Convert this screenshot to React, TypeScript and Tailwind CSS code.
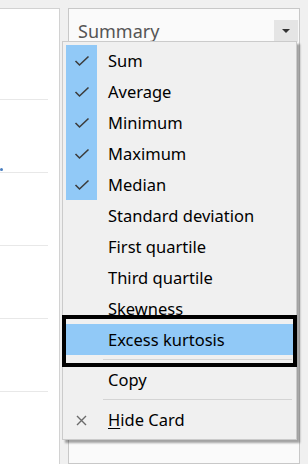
import React from 'react';

const font = { fontFamily: '"Noto Sans", "Open Sans", sans-serif' };

type Item = { label: string; checked?: boolean; active?: boolean };

const stats: Item[] = [
  { label: 'Sum', checked: true },
  { label: 'Average', checked: true },
  { label: 'Minimum', checked: true },
  { label: 'Maximum', checked: true },
  { label: 'Median', checked: true },
  { label: 'Standard deviation' },
  { label: 'First quartile' },
  { label: 'Third quartile' },
  { label: 'Skewness' },
  { label: 'Excess kurtosis', active: true },
];

const Check = () => (
  <svg width="16" height="12" viewBox="0 0 16 12" fill="none">
    <path d="M1.5 6 L5.5 10 L14.5 1.5" stroke="#3c3c3c" strokeWidth="1.6" />
  </svg>
);

const MenuRow: React.FC<{ item: Item }> = ({ item }) => (
  <div className={`flex h-[31px] items-center ${item.active ? 'bg-[#91c9f7]' : ''}`}>
    <div className={`flex h-full w-[31px] items-center justify-center ${item.checked ? 'bg-[#91c9f7]' : ''}`}>
      {item.checked && <Check />}
    </div>
    <span className="pl-[11px] pt-[2px] text-[16.5px] text-black">{item.label}</span>
  </div>
);

const Separator = () => (
  <div className="flex h-[9px] items-center pl-[37px] pr-[1px]">
    <div className="h-px flex-1 bg-[#d4d4d4]" />
  </div>
);

const SummaryMenu = () => (
  <div className="absolute left-[62px] top-[41px] w-[235px] border border-[#cbcbcb] bg-[#f0f0f0] p-[3px] pb-[4px] shadow-[3px_3px_2px_rgba(0,0,0,0.35)]">
    {stats.map((s) => (
      <MenuRow key={s.label} item={s} />
    ))}
    <Separator />
    <MenuRow item={{ label: 'Copy' }} />
    <Separator />
    <div className="flex h-[31px] items-center">
      <div className="flex w-[31px] items-center justify-center pt-[2px]">
        <svg width="11" height="11" viewBox="0 0 11 11">
          <path d="M1 1 L10 10 M10 1 L1 10" stroke="#6b6b6b" strokeWidth="1.4" />
        </svg>
      </div>
      <span className="pl-[11px] pt-[2px] text-[16.5px] text-black">
        <span className="underline underline-offset-2">H</span>ide Card
      </span>
    </div>
  </div>
);

export default function App() {
  return (
    <div className="relative h-[464px] w-[308px] overflow-hidden bg-[#f0f0f0]" style={font}>
      <div className="flex h-full gap-[8px] pt-[8px]">
        {/* left card */}
        <div className="relative h-full w-[60px] border-r border-t border-[#d2d2d2] bg-white">
          <div className="flex flex-col pt-[90px]">
            {[0, 1, 2, 3, 4].map((i) => (
              <div key={i} className="h-[73px] w-[48px] border-t border-[#e8e8e8]" />
            ))}
          </div>
          <div className="absolute left-0 top-[159px] h-[3px] w-[3px] rounded-sm bg-[#4a7fc1]" />
        </div>

        {/* summary card */}
        <div className="h-full w-[232px] border border-[#c8c8c8] bg-[#fafafa]">
          <div className="flex h-[33px] items-center justify-between pl-[9px] pr-[1px] pt-[10px]">
            <span className="text-[18px] leading-none text-[#555555]">Summary</span>
            <div className="flex h-[22px] w-[24px] items-center justify-center bg-[#e5e5e5]">
              <svg width="8" height="4" viewBox="0 0 8 4">
                <path d="M0 0 H8 L4 4 Z" fill="#333333" />
              </svg>
            </div>
          </div>
        </div>
      </div>

      <SummaryMenu />

      {/* highlight annotation */}
      <div className="absolute left-[62px] top-[315px] h-[52px] w-[235px] border-4 border-black" />
    </div>
  );
}
